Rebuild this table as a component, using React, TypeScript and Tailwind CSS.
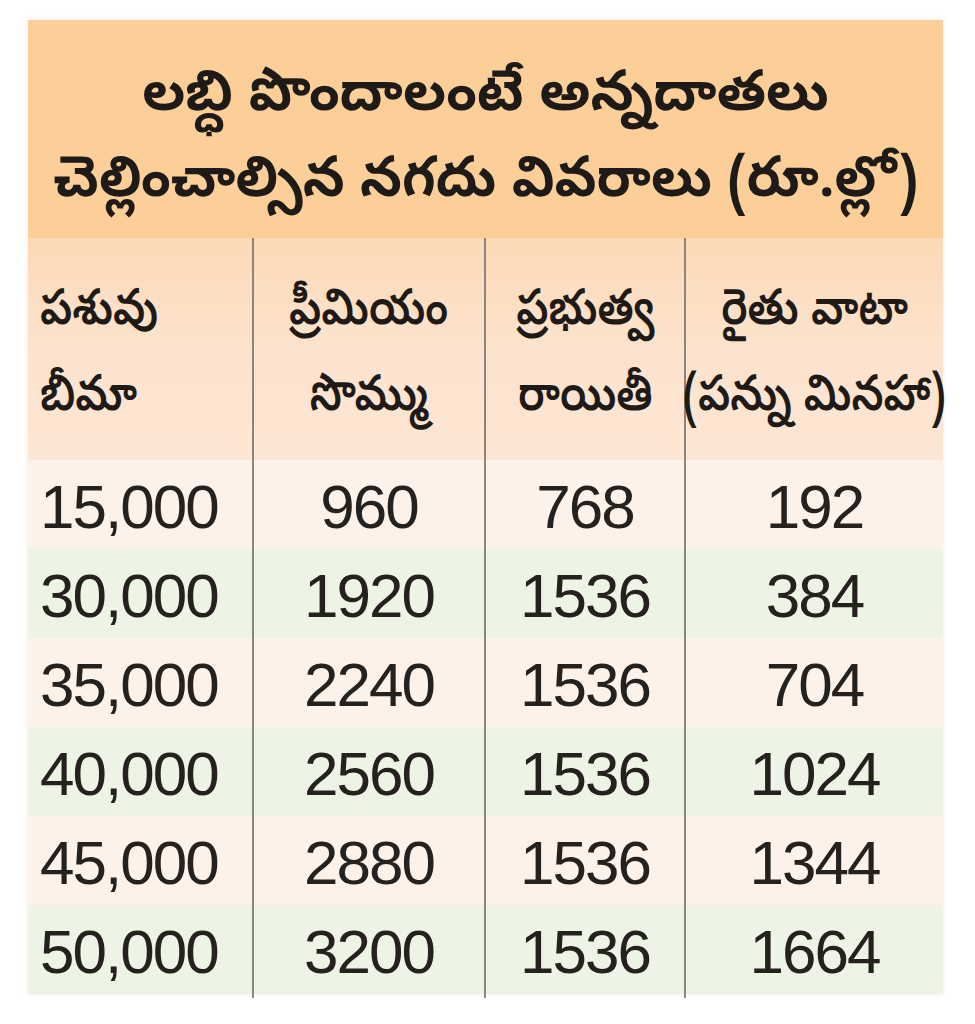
import React from 'react';

// Livestock insurance premium table (Telugu newspaper graphic)

const rows = [
  ['15,000', '960', '768', '192'],
  ['30,000', '1920', '1536', '384'],
  ['35,000', '2240', '1536', '704'],
  ['40,000', '2560', '1536', '1024'],
  ['45,000', '2880', '1536', '1344'],
  ['50,000', '3200', '1536', '1664'],
];

const telugu = "font-['Noto_Sans_Telugu','Lohit_Telugu','Pothana2000','Noto_Sans',sans-serif]";
const digits = "font-['Liberation_Sans',Arial,sans-serif]";

const headers: [string, string][] = [
  ['పశువు', 'బీమా'],
  ['ప్రీమియం', 'సొమ్ము'],
  ['ప్రభుత్వ', 'రాయితీ'],
  ['రైతు వాటా', '(పన్ను మినహా)'],
];

export default function App() {
  return (
    <div className="w-[975px] h-[1024px] bg-white pt-[20px] pl-[28px]">
      <div className="w-[915px] shadow-[0_0_6px_rgba(0,0,0,0.08)]">
        {/* title */}
        <div
          className={`h-[218px] pt-[26px] bg-[#fccf98] flex flex-col items-center justify-center text-[#1e1a17] text-[56px] leading-[86px] font-bold ${telugu}`}
        >
          <div className="whitespace-nowrap">లబ్ధి పొందాలంటే అన్నదాతలు</div>
          <div className="whitespace-nowrap scale-x-[0.97]">చెల్లించాల్సిన నగదు వివరాలు (రూ.ల్లో)</div>
        </div>

        {/* header */}
        <div className="grid grid-cols-[224px_232px_200px_259px] h-[222px] bg-gradient-to-b from-[#fcd9b6] via-[#fde3cd] to-[#fde6d4]">
          {headers.map((h, i) => (
            <div
              key={i}
              className={`flex flex-col justify-center pt-[18px] text-[#1e1a17] text-[50px] leading-[86px] font-semibold ${telugu} ${
                i === 0 ? 'items-start pl-[12px]' : 'items-center border-l-2 border-[#8c8480]'
              }`}
            >
              <div className={`whitespace-nowrap scale-x-[0.86] ${i === 0 ? 'origin-left' : ''}`}>{h[0]}</div>
              <div className={`whitespace-nowrap scale-x-[0.86] ${i === 0 ? 'origin-left' : ''}`}>{h[1]}</div>
            </div>
          ))}
        </div>

        {/* data */}
        {rows.map((r, ri) => (
          <div
            key={ri}
            className={`grid grid-cols-[224px_232px_200px_259px] h-[89px] ${
              ri % 2 === 0 ? 'bg-[#fcf2ea]' : 'bg-[#eef4e5]'
            }`}
          >
            {r.map((v, ci) => (
              <div
                key={ci}
                className={`flex items-center text-[62px] tracking-[-2px] text-[#24211f] ${digits} ${
                  ci === 0 ? 'pl-[12px]' : 'justify-center border-l-2 border-[#8c8480]'
                }`}
              >
                {v}
              </div>
            ))}
          </div>
        ))}
      </div>
    </div>
  );
}
